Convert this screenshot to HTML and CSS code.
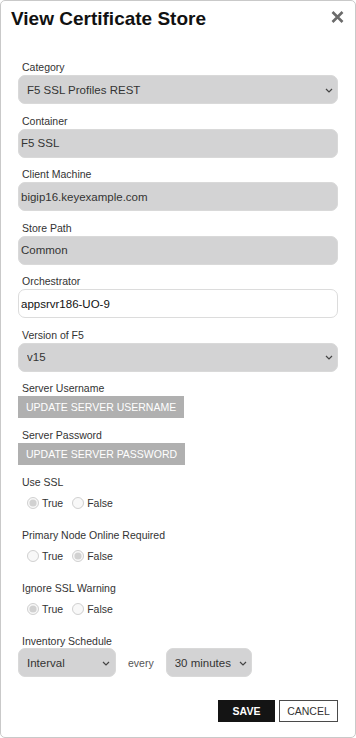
FILE: index.html
```html
<!DOCTYPE html>
<html lang="en">
<head>
  <meta charset="UTF-8" />
  <meta name="viewport" content="width=device-width, initial-scale=1.0"/>
  <title>View Certificate Store</title>
  <link rel="stylesheet" href="styles.css">
</head>
<body>
  <div class="dialog">
    <div class="dialog-header">
      <h1>View Certificate Store</h1>
      <button class="close-btn" type="button" aria-label="Close">
        <svg width="13" height="12" viewBox="0 0 13 12">
          <path d="M1.5 1 L11.5 11 M11.5 1 L1.5 11" stroke="#6b6b6b" stroke-width="2.6" fill="none"/>
        </svg>
      </button>
    </div>

    <form class="store-form">
      <div class="form-group">
        <label>Category</label>
        <div class="select-wrap">
          <select class="field">
            <option>F5 SSL Profiles REST</option>
          </select>
          <svg class="chevron" width="8" height="5" viewBox="0 0 8 5"><path d="M1 1 L4 4 L7 1" stroke="#444" stroke-width="1.2" fill="none"/></svg>
        </div>
      </div>

      <div class="form-group">
        <label>Container</label>
        <input class="field" type="text" value="F5 SSL" readonly />
      </div>

      <div class="form-group">
        <label>Client Machine</label>
        <input class="field" type="text" value="bigip16.keyexample.com" readonly />
      </div>

      <div class="form-group">
        <label>Store Path</label>
        <input class="field" type="text" value="Common" readonly />
      </div>

      <div class="form-group">
        <label>Orchestrator</label>
        <input class="field field-active" type="text" value="appsrvr186-UO-9" />
      </div>

      <div class="form-group">
        <label>Version of F5</label>
        <div class="select-wrap">
          <select class="field">
            <option>v15</option>
          </select>
          <svg class="chevron" width="8" height="5" viewBox="0 0 8 5"><path d="M1 1 L4 4 L7 1" stroke="#444" stroke-width="1.2" fill="none"/></svg>
        </div>
      </div>

      <div class="form-group btn-group">
        <label>Server Username</label>
        <button type="button" class="update-btn">Update Server Username</button>
      </div>

      <div class="form-group btn-group">
        <label>Server Password</label>
        <button type="button" class="update-btn">Update Server Password</button>
      </div>

      <div class="form-group radio-group">
        <label>Use SSL</label>
        <div class="radio-row">
          <label class="radio"><input type="radio" name="ssl" checked disabled /> True</label>
          <label class="radio"><input type="radio" name="ssl" disabled /> False</label>
        </div>
      </div>

      <div class="form-group radio-group">
        <label>Primary Node Online Required</label>
        <div class="radio-row">
          <label class="radio"><input type="radio" name="primary" disabled /> True</label>
          <label class="radio"><input type="radio" name="primary" checked disabled /> False</label>
        </div>
      </div>

      <div class="form-group radio-group">
        <label>Ignore SSL Warning</label>
        <div class="radio-row">
          <label class="radio"><input type="radio" name="ignore" checked disabled /> True</label>
          <label class="radio"><input type="radio" name="ignore" disabled /> False</label>
        </div>
      </div>

      <div class="form-group schedule-group">
        <label>Inventory Schedule</label>
        <div class="schedule-row">
          <div class="select-wrap schedule-type">
            <select class="field">
              <option>Interval</option>
            </select>
            <svg class="chevron" width="8" height="5" viewBox="0 0 8 5"><path d="M1 1 L4 4 L7 1" stroke="#444" stroke-width="1.2" fill="none"/></svg>
          </div>
          <span class="every">every</span>
          <div class="select-wrap schedule-interval">
            <select class="field">
              <option>30 minutes</option>
            </select>
            <svg class="chevron" width="8" height="5" viewBox="0 0 8 5"><path d="M1 1 L4 4 L7 1" stroke="#444" stroke-width="1.2" fill="none"/></svg>
          </div>
        </div>
      </div>

      <div class="form-actions">
        <button type="submit" class="save-btn">SAVE</button>
        <button type="button" class="cancel-btn">CANCEL</button>
      </div>
    </form>
  </div>
</body>
</html>
```

FILE: styles.css
```css
body {
  margin: 0;
  font-family: 'Liberation Sans', Arial, sans-serif;
  background: #fff;
}

.dialog {
  height: 738px;
  box-sizing: border-box;
  border: 1px solid #c9c9c9;
  border-radius: 5px;
  background: #fff;
}

.dialog-header {
  display: flex;
  justify-content: space-between;
  align-items: flex-start;
  padding: 7px 11px 0 10px;
}

.dialog-header h1 {
  margin: 0;
  font-size: 19px;
  line-height: 22px;
  font-weight: 700;
  color: #111;
}

.close-btn {
  background: none;
  border: none;
  padding: 0;
  margin-top: 3px;
  cursor: pointer;
  line-height: 0;
}

.store-form {
  padding: 30px 17px 0 17px;
}

.form-group {
  margin-bottom: 9.5px;
}

.form-group > label {
  display: block;
  padding-left: 4px;
  margin-bottom: 1px;
  font-size: 10.5px;
  line-height: 14px;
  color: #333;
}

.field {
  display: block;
  width: 100%;
  height: 29px;
  box-sizing: border-box;
  margin: 0;
  padding: 0 2px;
  border: 1px solid #d9d9d9;
  border-radius: 7px;
  background-color: #d3d3d4;
  font-family: 'Liberation Sans', Arial, sans-serif;
  font-size: 11.5px;
  color: #333;
  outline: none;
}

.field-active {
  background-color: #fff;
  border-color: #dcdcdc;
  color: #111;
}

.select-wrap {
  position: relative;
}

.select-wrap select {
  appearance: none;
  -webkit-appearance: none;
  padding: 0 20px 0 8px;
}

.chevron {
  position: absolute;
  right: 5px;
  top: 50%;
  margin-top: -2px;
  pointer-events: none;
}

.btn-group {
  margin-bottom: 10px;
}

.update-btn {
  display: block;
  height: 22px;
  padding: 0 8px;
  border: none;
  background: #b0b0b0;
  color: #fff;
  font-family: 'Liberation Sans', Arial, sans-serif;
  font-size: 10.5px;
  text-transform: uppercase;
  cursor: pointer;
}

.radio-group {
  margin-bottom: 12px;
}

.radio-row {
  display: flex;
  align-items: center;
  height: 26px;
  padding-left: 4px;
}

.radio {
  display: flex;
  align-items: center;
  margin-right: 4px;
  font-size: 10.5px;
  color: #333;
}

.radio input {
  width: 12px;
  height: 12px;
  margin: 0 3px 0 5px;
}

.schedule-group > label {
  margin-bottom: 0;
}

.schedule-row {
  display: flex;
  align-items: center;
}

.schedule-type {
  width: 98px;
}

.schedule-type .chevron {
  right: 6px;
}

.schedule-interval {
  width: 86px;
}

.every {
  margin: 0 12px;
  font-size: 10.5px;
  color: #555;
}

.form-actions {
  display: flex;
  justify-content: flex-end;
  gap: 4px;
  margin-top: 23px;
}

.save-btn,
.cancel-btn {
  height: 22px;
  padding: 0;
  font-family: 'Liberation Sans', Arial, sans-serif;
  font-size: 10.5px;
  cursor: pointer;
}

.save-btn {
  width: 57px;
  border: none;
  background: #141414;
  color: #fff;
  font-weight: 700;
}

.cancel-btn {
  width: 59px;
  border: 1px solid #4a4a4a;
  background: #fff;
  color: #333;
}
```
